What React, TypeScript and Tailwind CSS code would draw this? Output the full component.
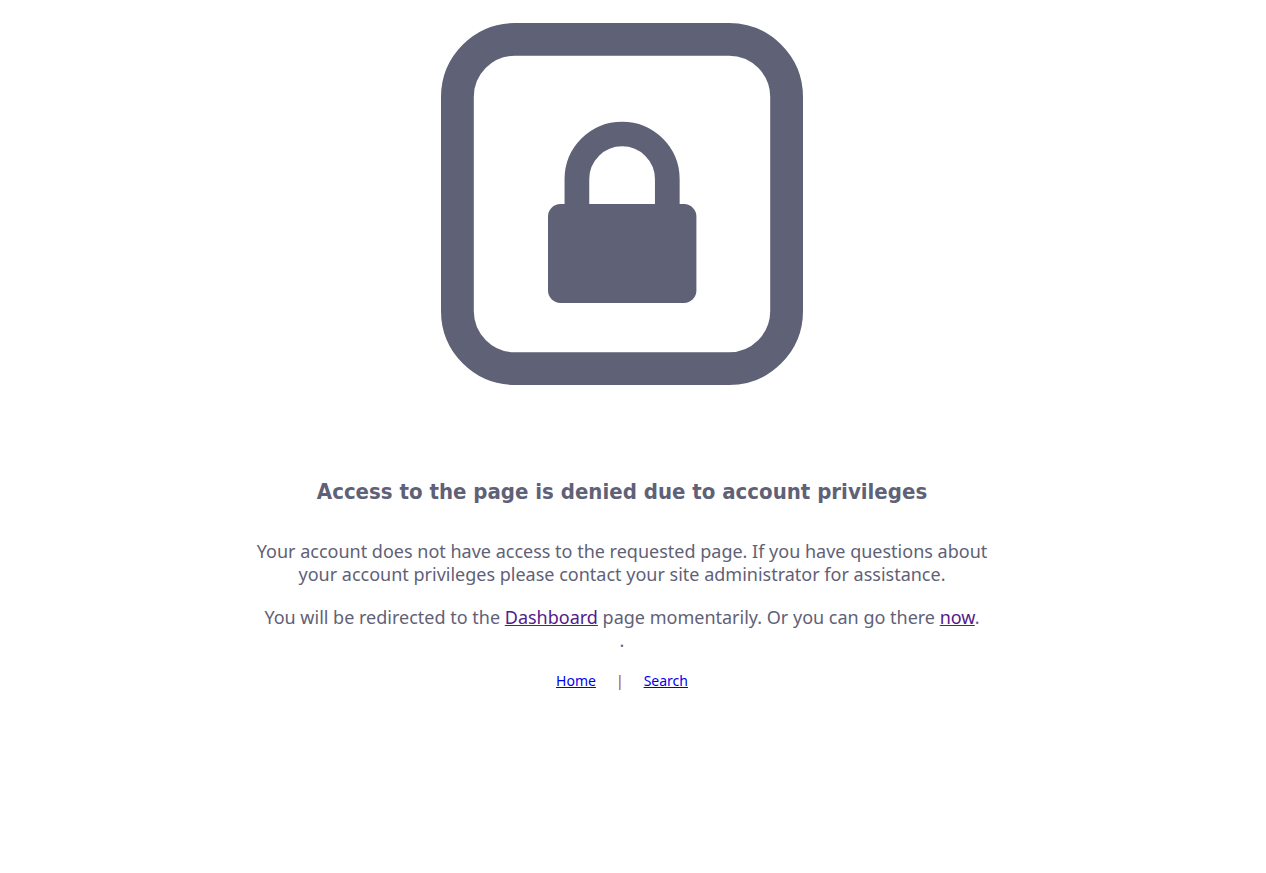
function LockIcon() {
  return (
    <svg viewBox="0 0 362 362" className="size-[362px]" fill="none" role="img" aria-label="Locked">
      <rect x="16.4" y="16.4" width="329.2" height="329.2" rx="57.6" stroke="#5f6177" strokeWidth="32.8" />
      <path d="M135.9 190V156.2a45.2 45.2 0 0 1 90.4 0V190" stroke="#5f6177" strokeWidth="24.7" />
      <rect x="107" y="181" width="148.4" height="99" rx="12.4" fill="#5f6177" />
    </svg>
  );
}

const visited = "text-[#551a8b] underline";
const unvisited = "text-[#0000ee] underline";

export default function App() {
  return (
    <main className="flex min-h-screen flex-col items-center bg-white pt-[23px] pr-[22px] text-center font-['Noto_Sans','DejaVu_Sans',sans-serif] text-[18px] leading-[23px] text-[#5f6177]">
      <LockIcon />
      <h1 className="mt-[93px] font-['DejaVu_Sans_Condensed','DejaVu_Sans',sans-serif] text-[22px] leading-[27px] font-bold">
        Access to the page is denied due to account privileges
      </h1>
      <p className="mt-[35px] max-w-[750px]">
        Your account does not have access to the requested page. If you have questions about your account
        privileges please contact your site administrator for assistance.
      </p>
      <p className="mt-5 max-w-[750px]">
        You will be redirected to the <a href="#dashboard" className={visited}>Dashboard</a> page momentarily. Or you
        can go there <a href="#dashboard" className={visited}>now</a>.
        <br />.
      </p>
      <nav className="mt-5 flex items-center gap-5 text-[14px] leading-[18px]">
        <a href="#home" className={unvisited}>Home</a>
        <span className="text-[#a03c3c]">|</span>
        <a href="#search" className={unvisited}>Search</a>
      </nav>
    </main>
  );
}
